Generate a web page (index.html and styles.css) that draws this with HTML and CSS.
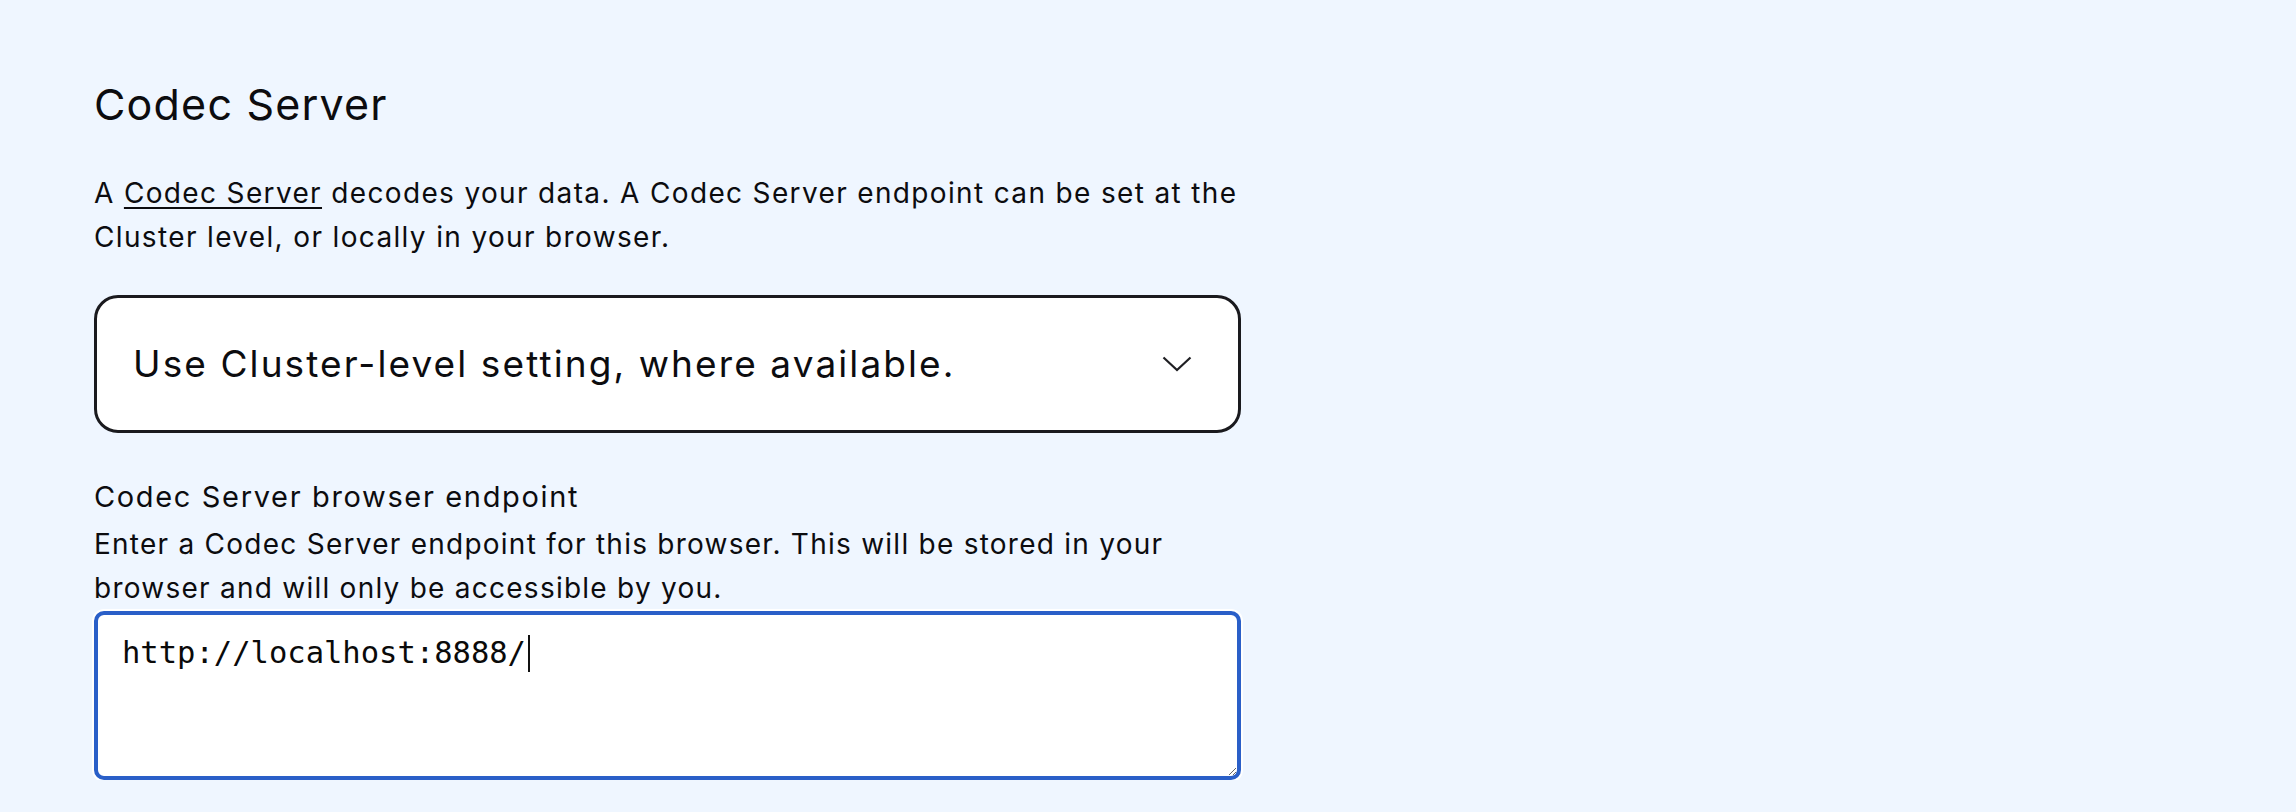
FILE: index.html
```html
<!DOCTYPE html>
<html lang="en">
<head>
<meta charset="utf-8">
<title>Codec Server</title>
<link rel="stylesheet" href="styles.css">
</head>
<body>
<main class="page">
  <section class="codec">
    <h1 class="codec-title">Codec Server</h1>
    <p class="codec-intro">A <a class="codec-link" href="#">Codec Server</a> decodes your data. A Codec Server endpoint can be set at the Cluster level, or locally in your browser.</p>
    <div class="select">
      <span class="select-value">Use Cluster-level setting, where available.</span>
      <svg class="select-chevron" width="30" height="16" viewBox="0 0 30 16" aria-hidden="true">
        <path d="M1.5 1.5 L15 14 L28.5 1.5" fill="none" stroke="#1f1f23" stroke-width="2.2"/>
      </svg>
    </div>
    <div class="field">
      <div class="field-label">Codec Server browser endpoint</div>
      <p class="field-help">Enter a Codec Server endpoint for this browser. This will be stored in your browser and will only be accessible by you.</p>
      <div class="field-input"><span class="field-text">http://localhost:8888/</span><span class="caret"></span></div>
    </div>
  </section>
</main>
</body>
</html>
```

FILE: styles.css
```css
html, body {
  margin: 0;
  padding: 0;
  background: #eff6ff;
}

body {
  font-family: Inter, "Liberation Sans", sans-serif;
  color: #0c0c0f;
}

.page {
  padding: 79px 0 0 94px;
}

.codec {
  width: 1147px;
  display: flex;
  flex-direction: column;
}

.codec-title {
  margin: 0;
  font-family: Inter, sans-serif;
  font-weight: 400;
  font-size: 43px;
  line-height: 50px;
  letter-spacing: 1.2px;
}

.codec-intro {
  margin: 42px -30px 0 0;
  font-size: 28px;
  line-height: 44px;
  letter-spacing: 1.35px;
}

.codec-link {
  color: inherit;
  text-decoration: underline;
  text-decoration-thickness: 2px;
  text-underline-offset: 4px;
}

.select {
  margin-top: 36px;
  height: 138px;
  box-sizing: border-box;
  border: 3.5px solid #1a1a1e;
  border-radius: 24px;
  background: #fff;
  display: flex;
  align-items: center;
  justify-content: space-between;
  padding: 0 46px 0 36px;
}

.select-value {
  font-size: 37px;
  line-height: 44px;
  letter-spacing: 2.1px;
}

.select-chevron {
  display: block;
}

.field {
  margin-top: 44px;
  display: flex;
  flex-direction: column;
}

.field-label {
  font-size: 29px;
  line-height: 40px;
  letter-spacing: 1.65px;
}

.field-help {
  margin: 5px -30px 0 0;
  font-size: 28px;
  line-height: 44px;
  letter-spacing: 1.25px;
}

.field-input {
  margin-top: 1px;
  height: 169px;
  box-sizing: border-box;
  border: 4px solid #2a5fc8;
  border-radius: 10px;
  box-shadow: 0 0 0 2px #ffffff;
  background: #fff;
  padding: 20px 25px 0 24px;
  font-family: "DejaVu Sans Mono", monospace;
  font-size: 30.5px;
  line-height: 36px;
  color: #0a0a0a;
  overflow: auto;
  resize: both;
  white-space: pre;
}

.caret {
  display: inline-block;
  width: 2px;
  height: 37px;
  background: #111;
  vertical-align: -9px;
  margin-left: 2px;
}
```
